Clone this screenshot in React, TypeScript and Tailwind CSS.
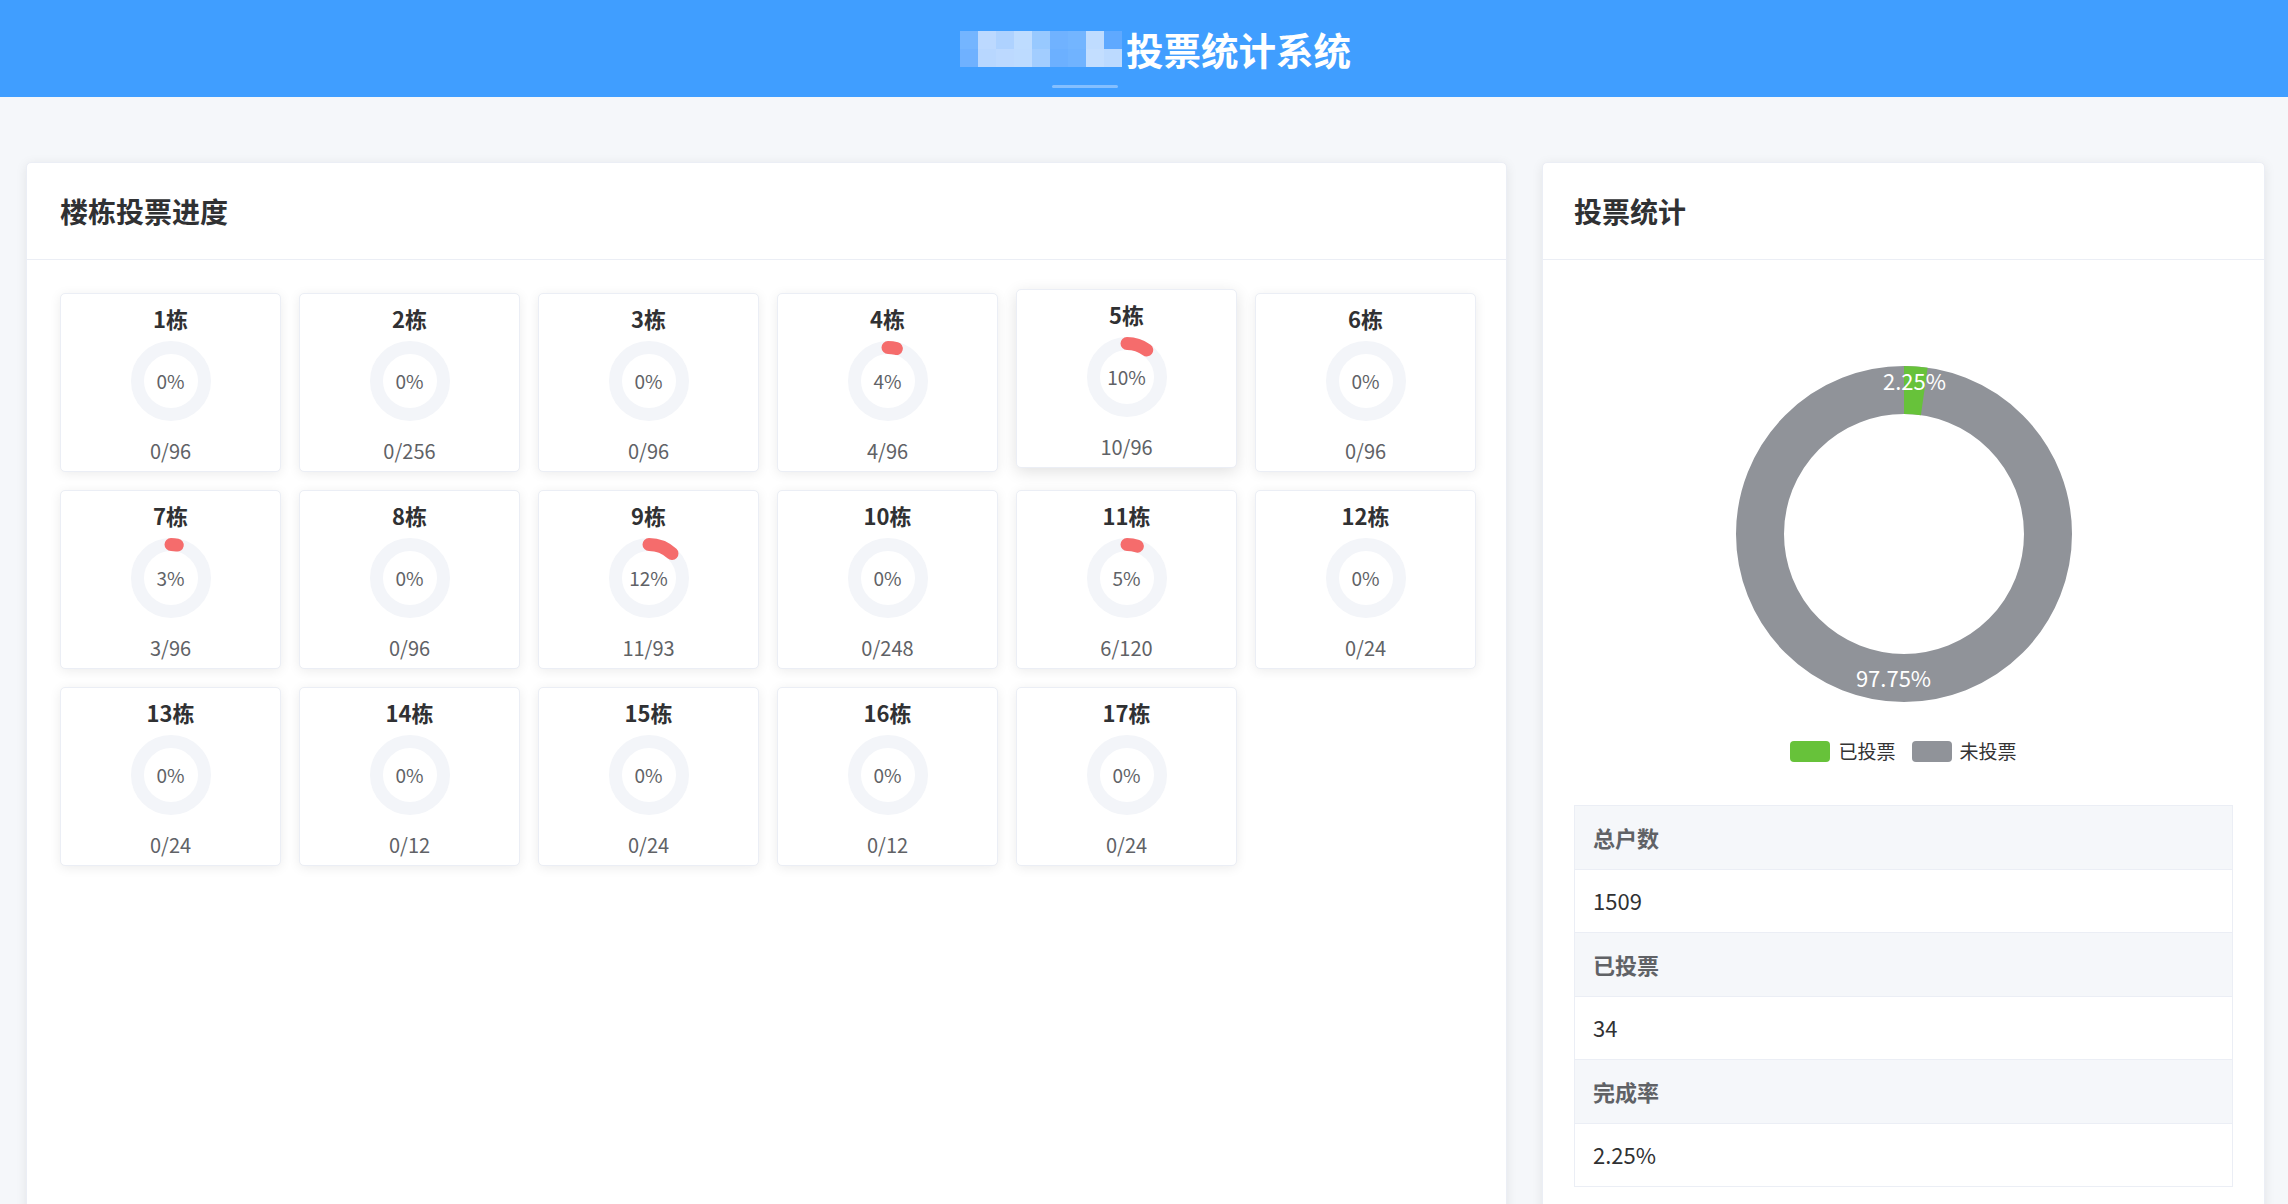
import React from "react";

type Building = { name: string; voted: number; total: number };

const buildings: Building[] = [
  { name: "1栋", voted: 0, total: 96 },
  { name: "2栋", voted: 0, total: 256 },
  { name: "3栋", voted: 0, total: 96 },
  { name: "4栋", voted: 4, total: 96 },
  { name: "5栋", voted: 10, total: 96 },
  { name: "6栋", voted: 0, total: 96 },
  { name: "7栋", voted: 3, total: 96 },
  { name: "8栋", voted: 0, total: 96 },
  { name: "9栋", voted: 11, total: 93 },
  { name: "10栋", voted: 0, total: 248 },
  { name: "11栋", voted: 6, total: 120 },
  { name: "12栋", voted: 0, total: 24 },
  { name: "13栋", voted: 0, total: 24 },
  { name: "14栋", voted: 0, total: 12 },
  { name: "15栋", voted: 0, total: 24 },
  { name: "16栋", voted: 0, total: 12 },
  { name: "17栋", voted: 0, total: 24 },
];

// blurred logo blocks, two rows of nine
const mosaic = [
  ["#74b5ff", "#bcd9ff", "#aed2ff", "#bedcff", "#98c9ff", "#70b2ff", "#73b5ff", "#bfdcff", "#5fa9ff"],
  ["#6fb1ff", "#b8d7ff", "#bcd9ff", "#bddbff", "#a2cdff", "#6cb0ff", "#70b3ff", "#c3deff", "#bcdaff"],
];

const font = { fontFamily: '"Noto Sans CJK SC", "Noto Sans", sans-serif' };

const Ring = ({ pct }: { pct: number }) => {
  const r = 33.5;
  const c = 2 * Math.PI * r;
  return (
    <div className="relative h-[80px] w-[80px]">
      <svg width="80" height="80" viewBox="0 0 80 80">
        <circle cx="40" cy="40" r={r} fill="none" stroke="#f3f5f9" strokeWidth="13" />
        {pct > 0 && (
          <circle
            cx="40"
            cy="40"
            r={r}
            fill="none"
            stroke="#f56c6c"
            strokeWidth="13"
            strokeLinecap="round"
            strokeDasharray={`${(c * pct) / 100} ${c}`}
            transform="rotate(-90 40 40)"
          />
        )}
      </svg>
      <div className="absolute inset-0 flex items-center justify-center text-[19px] text-[#606266]">
        {pct}%
      </div>
    </div>
  );
};

const BuildingCard = ({ b, hovered }: { b: Building; hovered?: boolean }) => {
  const pct = Math.round((b.voted / b.total) * 100);
  return (
    <div
      className={
        "flex h-[179px] flex-col items-center rounded-[5px] border border-[#ebeef5] bg-white pt-[9px] " +
        (hovered
          ? "-translate-y-[4px] shadow-[0_4px_16px_0_rgba(0,0,0,0.12)]"
          : "shadow-[0_2px_12px_0_rgba(0,0,0,0.08)]")
      }
    >
      <div className="text-[22px] font-bold leading-[30px] text-[#303133]">{b.name}</div>
      <div className="mt-[8px]">
        <Ring pct={pct} />
      </div>
      <div className="mt-[16px] text-[20px] leading-[28px] text-[#606266]">
        {b.voted}/{b.total}
      </div>
    </div>
  );
};

const Donut = () => {
  const r = 144;
  const c = 2 * Math.PI * r;
  const voted = 2.25;
  return (
    <svg width="336" height="336" viewBox="0 0 336 336" overflow="visible">
      <circle cx="168" cy="168" r={r} fill="none" stroke="#909399" strokeWidth="48" />
      <circle
        cx="168"
        cy="168"
        r={r}
        fill="none"
        stroke="#67c23a"
        strokeWidth="48"
        strokeDasharray={`${(c * voted) / 100} ${c}`}
        transform="rotate(-90 168 168)"
      />
      <text x="178.5" y="14" fill="#fff" fontSize="22" textAnchor="middle" dominantBaseline="central" style={font}>
        2.25%
      </text>
      <text x="157.5" y="311" fill="#fff" fontSize="22" textAnchor="middle" dominantBaseline="central" style={font}>
        97.75%
      </text>
    </svg>
  );
};

const stats = [
  { label: "总户数", value: "1509" },
  { label: "已投票", value: "34" },
  { label: "完成率", value: "2.25%" },
];

export default function App() {
  return (
    <div className="min-h-screen bg-[#f5f7fa] pb-[20px]" style={font}>
      <header className="flex h-[97px] items-center justify-center bg-[#409eff]">
        <div className="flex items-center gap-[4px] pl-[23px]">
          <div className="relative">
            <div className="flex flex-col">
              {mosaic.map((row, i) => (
                <div key={i} className="flex">
                  {row.map((col, j) => (
                    <div key={j} className="h-[18px] w-[18px]" style={{ backgroundColor: col }} />
                  ))}
                </div>
              ))}
            </div>
            <div className="absolute left-[92px] top-[54px] h-[3px] w-[66px] rounded-full bg-[#84bfff]" />
          </div>
          <h1 className="text-[37.5px] font-bold leading-[50px] text-white">投票统计系统</h1>
        </div>
      </header>

      <main className="flex items-stretch gap-[35px] pl-[26px] pr-[23px] pt-[65px]">
        <section className="flex-1 rounded-[5px] border border-[#ebeef5] bg-white shadow-[0_2px_12px_0_rgba(0,0,0,0.08)]">
          <div className="border-b border-[#ebeef5] px-[33px] py-[28px]">
            <h2 className="text-[28px] font-bold leading-[40px] text-[#303133]">楼栋投票进度</h2>
          </div>
          <div className="grid grid-cols-[repeat(6,221px)] gap-[18px] pl-[33px] pt-[33px]">
            {buildings.map((b) => (
              <BuildingCard key={b.name} b={b} hovered={b.name === "5栋"} />
            ))}
          </div>
        </section>

        <section className="w-[723px] rounded-[5px] border border-[#ebeef5] bg-white shadow-[0_2px_12px_0_rgba(0,0,0,0.08)]">
          <div className="border-b border-[#ebeef5] px-[31px] py-[28px]">
            <h2 className="text-[28px] font-bold leading-[40px] text-[#303133]">投票统计</h2>
          </div>
          <div className="px-[31px] pb-[32px]">
            <div className="flex justify-center pt-[106px]">
              <Donut />
            </div>
            <div className="mt-[38px] flex items-center justify-center gap-[16px] text-[19px] leading-[22px] text-[#333]">
              <div className="flex items-center gap-[8px]">
                <span className="h-[21px] w-[40px] rounded-[4px] bg-[#67c23a]" />
                <span>已投票</span>
              </div>
              <div className="flex items-center gap-[8px]">
                <span className="h-[21px] w-[40px] rounded-[4px] bg-[#909399]" />
                <span>未投票</span>
              </div>
            </div>
            <div className="mt-[43px] border border-b-0 border-[#ebeef5]">
              {stats.map((s) => (
                <React.Fragment key={s.label}>
                  <div className="flex h-[63.5px] items-center border-b border-[#ebeef5] bg-[#f5f7fa] px-[18px] text-[22px] font-bold text-[#606266]">
                    {s.label}
                  </div>
                  <div className="flex h-[63.5px] items-center border-b border-[#ebeef5] px-[18px] text-[22px] text-[#303133]">
                    {s.value}
                  </div>
                </React.Fragment>
              ))}
            </div>
          </div>
        </section>
      </main>
    </div>
  );
}
